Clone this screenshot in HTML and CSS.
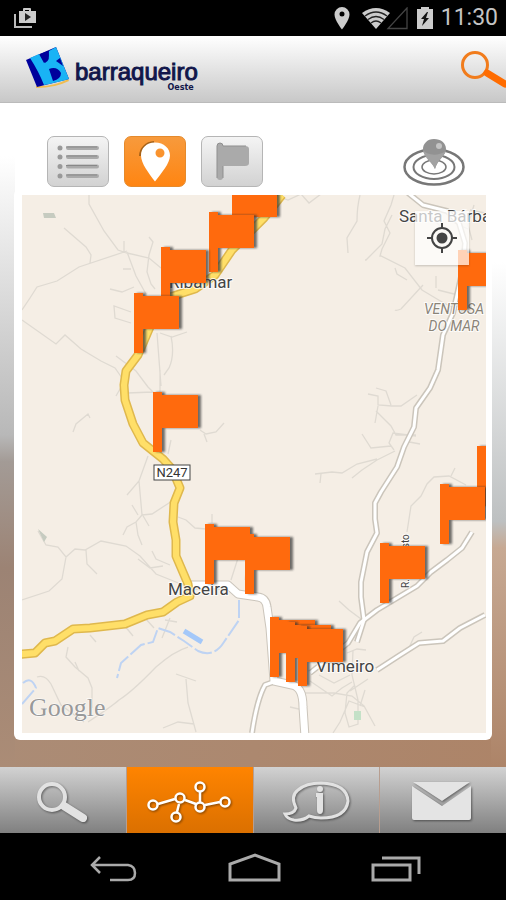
FILE: index.html
```html
<!DOCTYPE html>
<html lang="pt">
<head>
<meta charset="utf-8">
<meta name="viewport" content="width=device-width, initial-scale=1">
<title>Barraqueiro Oeste</title>
<link rel="stylesheet" href="styles.css">
</head>
<body>
<div class="status">
  <svg width="24" height="22" viewBox="0 0 24 22" aria-hidden="true"><path d="M1 7v13h17" fill="none" stroke="#bbb" stroke-width="2"/><path d="M5 4h4V2q0-1 1-1h6q1 0 1 1v2h5v12H5zM11 3v1h4V3z" fill="#ccc" fill-rule="evenodd"/><path d="M11 6v8l6-4z" fill="#222"/></svg>
  <div class="status-right">
    <svg width="16" height="24" viewBox="0 0 16 24" aria-hidden="true"><path d="M8 1a7.500 7.500 0 0 0-7.500 7.500C.5 14 8 23.500 8 23.500S15.500 14 15.500 8.500A7.500 7.500 0 0 0 8 1zm0 4.500a2.500 2.500 0 1 1 0 5 2.500 2.500 0 0 1 0-5z" fill="#ccc" fill-rule="evenodd"/></svg>
    <svg width="47" height="23" viewBox="0 0 47 23" aria-hidden="true"><path d="M0 6Q14-4 28 6L14 22z" fill="#ccc"/><path d="M3 9q11-8 22 0M6 12.500q8-6 16 0M9 16q5-4 10 0" fill="none" stroke="#222" stroke-width="1.300"/><path d="M26 21.500H45V1z" fill="none" stroke="#444" stroke-width="1.300"/></svg>
    <svg width="16" height="24" viewBox="0 0 16 24" aria-hidden="true"><path d="M0 3h4V1h8v2h4v20H0z" fill="#ccc"/><path d="M10 6l-6 7h3l-2 7 7-8H9l2-6z" fill="#111"/></svg>
    <time class="clock">11:30</time>
  </div>
</div>
<header class="header">
  <a class="logo" href="#" aria-label="barraqueiro Oeste">
    <svg width="46" height="44" viewBox="25 46 46 44" aria-hidden="true"><path d="M36 86q17 1 32-7l1 2q-14 7-33 7z" fill="#f1bd50"/><path d="M26 60l30-13 13 32q-16 4-32 8z" fill="#00009c"/><path d="M30 58l9-4 5 9q5-3 5-12l7-4 13 32q-15 4-25 6-5-13-14-27z" fill="#19b3f5"/><path d="M40 54l8-3q3 9-3 12zM49 69q8-3 12 4 0 6-8 8zM56 61l4-3 3 8q-4-3-7-5z" fill="#00009c"/></svg>
    <span class="wordmark"><span class="brand">barraqueiro</span><span class="region">Oeste</span></span>
  </a>
  <button class="plain search" aria-label="Pesquisar">
    <svg width="46" height="42" viewBox="0 0 46 42" aria-hidden="true"><circle cx="15" cy="17" r="12.500" fill="none" stroke="#f17c1c" stroke-width="3"/><path d="M27 25l18 11" stroke="#ff6c00" stroke-width="7" stroke-linecap="round"/></svg>
  </button>
</header>
<main class="main">
  <div class="tools">
    <button class="tool" aria-label="Lista"><svg width="60" height="49" viewBox="48 137 60 49" aria-hidden="true"><g stroke="#aaa" stroke-width="4" stroke-linecap="round"><path d="M68 148h29M68 157h29M68 166.500h29M68 176h29"/><path d="M60 148h0M60 157h0M60 166.500h0M60 176h0" stroke="#999" stroke-width="5"/></g><path d="M66 147h31M66 156h31M66 165.500h31M66 175h31" stroke="#888"/></svg></button>
    <button class="tool active" aria-label="Mapa"><svg width="60" height="49" viewBox="125 137 60 49" aria-hidden="true"><path d="M154 142a15 14 0 0 0-14 14" fill="none" stroke="#a56117" stroke-width="2"/><path d="M155 142.500c-9 0-14 6-14 13 0 8 8 18 14 26 6-8 15-18 15-26 0-7-6-13-15-13zm5 6a4.500 4.500 0 1 1 0 9 4.500 4.500 0 0 1 0-9z" fill="#fff" fill-rule="evenodd"/></svg></button>
    <button class="tool" aria-label="Paragens"><svg width="60" height="49" viewBox="202 137 60 49" aria-hidden="true"><path d="M217 146q0-3 3-3t3 3h22q4 0 4 3v14q0 3-4 3h-22v11q0 3-3 3t-3-3z" fill="#aaa"/><path d="M217 178v-32q0-3 3-3t3 3h23M223 166v12" fill="none" stroke="#8f8f8f"/></svg></button>
    <button class="plain target" aria-label="Perto de mim"><svg width="64" height="50" viewBox="0 0 64 50" aria-hidden="true"><g fill="none" stroke="#777"><ellipse cx="32" cy="30" rx="29.500" ry="17.500" stroke-width="2.500"/><ellipse cx="32" cy="30" rx="20.500" ry="12" stroke-width="2"/><ellipse cx="32" cy="30" rx="12" ry="7" stroke-width="1.500"/></g><path d="M32 2c-7 0-11 5-11 10 0 7 8 10 12 20 2-9 11-13 11-20C44 6 39 2 32 2z" fill="#929292"/><path d="M21 13c4 5 14 7 23 1-2 5-9 10-11 18-3-7-11-11-12-19z" fill="#a2a2a2"/><circle cx="37" cy="9" r="3" fill="#c4c4c4"/></svg></button>
  </div>
  <section class="card">
    <svg class="map" viewBox="22 195 464 538" preserveAspectRatio="xMidYMid slice" role="img" aria-label="Mapa">
      <defs>
        <path id="flag" d="M0 0h9v3h36v33H9v24H0z"/>
        <filter id="shade" x="-20%" y="-20%" width="150%" height="150%"><feDropShadow dx="3" dy="0" stdDeviation="1" flood-color="#333" flood-opacity=".7"/></filter>
      </defs>
      <rect x="22" y="195" width="464" height="538" fill="#f5eee5"/>
      <g class="lanes">
        <path d="M89 195v9l15 27 14 19 9 3 22 5 12 10M22 310l8-12 7-11 20-6 22-14 48-16M64 228l22 19 5 8-1 8M127 252l9 24 10 18M22 320l34 24 9-9 16 14 20 12 14 7 7 10M124 253v-12M149 237l4 5-4 13-2 17 4 12 4 5M123 269h8M110 289l12 3 12-5M131 312l-17-6 1 12 16 5M157 333l4 53M171 336q4 19-2 32l-5 7M160 333l12 4 15-5M116 356l20 15 12 16 6 6 6 12M160 370v26M127 393l26-1M116 396l8-14"/>
        <path d="M148 456l-9 25-12 14M139 481l3 34 10-1 20-13M142 515l-6 7-9 5-4 8M136 522l2 13 4 10M132 505l6 10M142 514l7 12M171 440l-3 14M178 517l8 3 9 8 11 1M38 531l8 14 12 2 8 10 9-8 10 1 16-9 25 5 14 10 16 18 30 12M86 550l1 14 10 10M66 557l-4 22-13 12-27 9M73 432l3-8 12-10 2 4M200 430l6 4 10-2 8-9M204 434l3 8M152 551l4 8 14 6M138 559l12 9 13-2M212 514v9M238 558l-7 22M247 562l-2 18"/>
        <path d="M68 647l-2 10 9 10 13 11 4 10v20M37 677q8-3 14 7l10 21 23 17M88 722q23-15 31-22 14-9 37-33 18-16 32-20M176 674l20 7M186 679l2 24 8 29M163 728l15-6 16 2M75 662l4 9M170 618l-8 20M120 620l13 16M145 618l9 10M90 635l6 7M165 620l12 2"/>
        <path d="M360 195q-3 12-3 26l-10 17 1 15M280 197l8 3 13-6 8 9 12-9M392 215l-7 14-3 15-16 16-1 0 0 0M394 195l-3 10-7 16 6 12-8 16-2 7 1 0 24 12 17 22 20 12 20 10M395 268l2 6 10 6M423 285q-11 12-22 24-5 2-6 1M436 276v12M438 290l20 5M474 205l-6 20 4 15M430 216l16 16M470 210l15 3M448 220l20 9"/>
        <path d="M368 394l10 2v9l14 1h9l16-11M376 388l10 3 5 14M378 406l-3 17M376 411l15 15 5 9h20M416 436l-23-3-4 10 5 7M362 434l9 14 20-2M395 451l-18 9-15 10-10 8M377 459l-20 5-15 9-10-1-17 2M321 474l-1 9M404 441l16 3M407 532l4-26 10-10 6-12 7-7 15-1 17 9M451 476l4-8M408 540v30"/>
        <path d="M339 601l10 9 12 9M408 650l6-13 8-5M347 653l10-4 9 1M353 650l-1 25 6 25 0 24-9 3-4-14 2-20 8-8M304 693h30l18 3 12 10 11 20M310 681l22 15 10-8 10-6M319 675l15 8 16-8M365 707l-16-6-9 21-7 11M350 691l18-12M365 690l-5 16M290 707l13 3"/>
      </g>
      <g fill="#c6cbc0"><path d="M43 213h11l2 5H44zM38 529l9 8-3 5z"/><path d="M354 711h7v9h-7z" fill="#c4e1c7"/></g>
      <g fill="none" stroke="#bed3f3" stroke-width="2"><path d="M22 704l14-16q-5-13-14-4M239 600v20l-15 22q-10 16-26 9l-14-10-14-9-12-4-5 14-12 3-20 18-4 15" stroke-dasharray="18 3"/><path d="M184 631l18 11" stroke="#a4c8f9" stroke-width="5"/></g>
      <g class="road-edge"><path id="r1" d="M408 193l15 12 24 6 12 12 6 20-2 25-10 45-10 22-5 35-8 18-14 20-2 19-10 20-7 20-16 25-6 11v16l2 14-10 19-6 30v15l3 23-7 22"/><path id="r2" d="M310 673l38-30 12-20 17-13 20-12 20-12 14-14 16-12 15-12 10-16M377 670l20-13 22-14 24-2 17-13 25-13"/></g>
      <g class="road"><use href="#r1"/><use href="#r2"/></g>
      <g class="road-edge main-road"><path id="r3" d="M190 585h38l10 9 20 3q8 1 9 10l3 21 4 53 18 4q11 2 11 22l2 30"/></g>
      <g class="road-edge"><path id="r4" d="M276 681l-11 4q-8 14-13 48"/></g>
      <g class="road main-road"><use href="#r3"/></g>
      <g class="road"><use href="#r4"/></g>
      <g class="highway-edge"><path id="n247" d="M282 195l-18 23-32 32-17 25-20 14-25 8-20 30-12 28-12 16-2 14 1 15 8 24 10 19 20 16 9 10 8 19-6 15-1 19 3 18v16l12 28 2 12-13 6-14 10-16 3-22 9-35 4-17 1-18 12-10 2-10 10-23 2"/></g>
      <g class="highway"><use href="#n247"/></g>
      <g class="places">
        <text x="169" y="288">Ribamar</text><text x="168" y="595">Maceira</text><text x="316" y="672">Vimeiro</text><text x="399" y="222">Santa Bárbara</text>
        <text class="area" x="454" y="314">VENTOSA</text><text class="area" x="454" y="331">DO MAR</text>
        <text class="street" transform="translate(409 588) rotate(-90)">R. Sol Posto</text>
      </g>
      <rect x="154" y="465" width="36" height="15" fill="#fff" stroke="#444"/><text class="shield" x="172" y="477">N247</text>
      <text class="google" x="29" y="716">Google</text>
      <g fill="#ff6b07">
        <g filter="url(#shade)"><use href="#flag" x="232" y="181"/></g>
        <g filter="url(#shade)"><use href="#flag" x="209" y="212"/></g>
        <g filter="url(#shade)"><use href="#flag" x="161" y="247"/></g>
        <g filter="url(#shade)"><use href="#flag" x="134" y="293"/></g>
        <g filter="url(#shade)"><use href="#flag" x="153" y="392"/></g>
        <g filter="url(#shade)"><use href="#flag" x="205" y="524"/><use href="#flag" x="245" y="534"/></g>
        <g filter="url(#shade)"><use href="#flag" x="270" y="617"/></g>
        <g filter="url(#shade)"><use href="#flag" x="286" y="622"/></g>
        <g filter="url(#shade)"><use href="#flag" x="298" y="626"/></g>
        <g filter="url(#shade)"><use href="#flag" x="458" y="250"/></g>
        <g filter="url(#shade)"><use href="#flag" x="477" y="446"/></g>
        <g filter="url(#shade)"><use href="#flag" x="440" y="484"/></g>
        <g filter="url(#shade)"><use href="#flag" x="380" y="543"/></g>
      </g>
    </svg>
    <button class="locate" aria-label="A minha localização"><svg width="30" height="30" viewBox="0 0 30 30" aria-hidden="true"><circle cx="15" cy="15" r="10" fill="none" stroke="#444" stroke-width="2"/><circle cx="15" cy="15" r="5.500" fill="#444"/><path d="M15 0v5M15 25v5M0 15h5M25 15h5" stroke="#444" stroke-width="2"/></svg></button>
  </section>
</main>
<nav class="tabs">
  <button class="tab" aria-label="Pesquisa"><svg width="126" height="66" viewBox="0 0 126 66" aria-hidden="true"><circle cx="52" cy="30" r="13" fill="none" stroke="#e2e2e2" stroke-width="4"/><path d="M64 39l19 12" stroke="#e2e2e2" stroke-width="8" stroke-linecap="round"/></svg></button>
  <button class="tab current" aria-label="Linhas"><svg width="126" height="66" viewBox="0 0 126 66" aria-hidden="true"><g fill="none" stroke="#fff" stroke-width="2.500"><path d="M31 37l17-5M58 33l11 4M52 37l-2 8M73 25v10M78 38l15-3"/><circle cx="26" cy="38" r="4.500"/><circle cx="53" cy="31" r="4.500"/><circle cx="49" cy="50" r="4.500"/><circle cx="73" cy="20" r="4.500"/><circle cx="73" cy="40" r="4.500"/><circle cx="98" cy="35" r="4.500"/></g></svg></button>
  <button class="tab" aria-label="Informações"><svg width="126" height="66" viewBox="0 0 126 66" aria-hidden="true"><path d="M42 41q-6-12 2-18 8-7 23-7 26 1 27 18-2 17-27 17-6 0-12-2-6 5-15 4-7-1-9-6 9 0 11-6z" fill="none" stroke="#e2e2e2" stroke-width="3"/><path d="M62 26h7v17q0 4-3 4t-3-4V30h-1z" fill="#e2e2e2"/><circle cx="66" cy="22" r="3" fill="#e2e2e2"/></svg></button>
  <button class="tab" aria-label="Mensagens"><svg width="126" height="66" viewBox="0 0 126 66" aria-hidden="true"><path d="M33 15h57L62 34z" fill="#e4e4e4"/><path d="M32 19l30 20 29-20v32q0 2-2 2H34q-2 0-2-2z" fill="#e4e4e4"/></svg></button>
</nav>
<footer class="system">
  <button class="plain" aria-label="Voltar"><svg width="50" height="30" viewBox="88 853 50 30" aria-hidden="true"><path d="M100 857l-8 8 8 8M92 865h36q7 1 7 8t-7 7h-18" fill="none" stroke="#aaa" stroke-width="2.500"/></svg></button>
  <button class="plain" aria-label="Início"><svg width="56" height="30" viewBox="226 853 56 30" aria-hidden="true"><path d="M229 880v-16l25-9 24 9v16z" fill="none" stroke="#aaa" stroke-width="3"/></svg></button>
  <button class="plain" aria-label="Recentes"><svg width="50" height="30" viewBox="371 853 50 30" aria-hidden="true"><path d="M373 865h37v15h-37zM382 858h37v16" fill="none" stroke="#aaa" stroke-width="3"/></svg></button>
</footer>
</body>
</html>
```
FILE: styles.css
```css
* { box-sizing: border-box; }
body {
  margin: 0;
  min-height: 100vh;
  display: flex;
  flex-direction: column;
  font-family: Roboto, "Liberation Sans", sans-serif;
  background: #000;
}
button { margin: 0; padding: 0; border: 0; font: inherit; }
svg { display: block; flex: none; }
.plain { background: none; }

.status {
  display: flex;
  align-items: center;
  justify-content: space-between;
  height: 36px;
  padding: 0 8px 0 14px;
  color: #c4c4c4;
}
.status-right { display: flex; align-items: center; gap: 8px; }
.status-right svg:first-child { margin-right: 4px; }
.clock { font-size: 23px; line-height: 36px; }

.header {
  display: flex;
  align-items: center;
  justify-content: space-between;
  height: 67px;
  padding-left: 25px;
  background: linear-gradient(#fff, #c8c8c8);
  border-bottom: 1px solid #bbb;
}
.logo { display: flex; gap: 4px; color: #11164a; text-decoration: none; }
.wordmark { display: flex; flex-direction: column; padding-top: 14px; }
.brand {
  font: 24px/24px "Liberation Sans", sans-serif;
  -webkit-text-stroke: 1px #11164a;
}
.region {
  align-self: flex-end;
  padding-right: 4px;
  font: bold 8px/8px "DejaVu Sans", sans-serif;
}

.main {
  flex: 1;
  display: flex;
  flex-direction: column;
  padding: 33px 14px 27px;
  background:
    linear-gradient(#fff 8%, #f4f4f4 14%, #b8b8b8 50%, #a39b96 54%, #9c8374 70%, #ab8c76) left / 15px 100% no-repeat,
    linear-gradient(#fff 24%, #bdc0c1 63%, #c7a993 67%, #ad8468) right / 15px 100% no-repeat,
    linear-gradient(90deg, #ab8c76, #ad8468) bottom / 100% 30px no-repeat,
    #fff;
}
.tools { display: flex; align-items: center; gap: 15px; padding: 0 26px 2px 33px; }
.tool {
  border: 1px solid #b5b5b5;
  border-radius: 7px;
  background: linear-gradient(#f4f4f4, #d2d2d2);
}
.tool.active { border-color: #e58a2c; background: linear-gradient(#f79a3c, #ff8512); }
.target { margin-left: auto; }

.card {
  flex: 1;
  position: relative;
  display: flex;
  padding: 6px 6px 7px 8px;
  border-radius: 6px;
  background: #fff;
}
.map { flex: 1; width: 100%; min-width: 0; overflow: hidden; }
.locate {
  position: absolute;
  top: 22px;
  right: 23px;
  display: grid;
  place-items: center;
  width: 54px;
  height: 54px;
  background: rgba(255, 255, 255, .7);
  box-shadow: 0 1px 2px rgba(0, 0, 0, .2);
}

.lanes { fill: none; stroke: #dfdad2; stroke-width: 1.3; }
.road-edge, .road, .highway-edge, .highway { fill: none; stroke-linejoin: round; }
.road-edge { stroke: #cbc5bb; stroke-width: 6; }
.road { stroke: #fff; stroke-width: 3; }
.road-edge.main-road { stroke-width: 9; }
.road.main-road { stroke-width: 7; }
.highway-edge { stroke: #dfb84d; stroke-width: 9; }
.highway { stroke: #ffdf68; stroke-width: 6; }
.places text {
  font-size: 17px;
  fill: #444;
  stroke: #fff;
  stroke-width: 2px;
  stroke-opacity: .8;
  paint-order: stroke;
}
.places .area { font-size: 14px; font-style: italic; fill: #8b8478; text-anchor: middle; }
.places .street { font-size: 10px; }
.shield { font-size: 13px; fill: #333; text-anchor: middle; }
.google { font: 26px "Liberation Serif", serif; fill: #999; stroke: #fff; stroke-width: 1px; paint-order: stroke; }

.tabs {
  display: grid;
  grid-template-columns: repeat(4, 1fr);
  gap: 1px;
  background: #b79e90;
}
.tab {
  display: grid;
  place-items: center;
  min-width: 0;
  height: 66px;
  overflow: hidden;
  background: linear-gradient(#d2d2d2, #808080);
}
.tab.current { background: linear-gradient(#ff8400, #db7000); }
.tab svg { filter: drop-shadow(1px 1px 1px rgba(0, 0, 0, .45)); }

.system {
  display: flex;
  align-items: center;
  justify-content: space-between;
  height: 67px;
  padding: 2px 85px 0 88px;
}
```
